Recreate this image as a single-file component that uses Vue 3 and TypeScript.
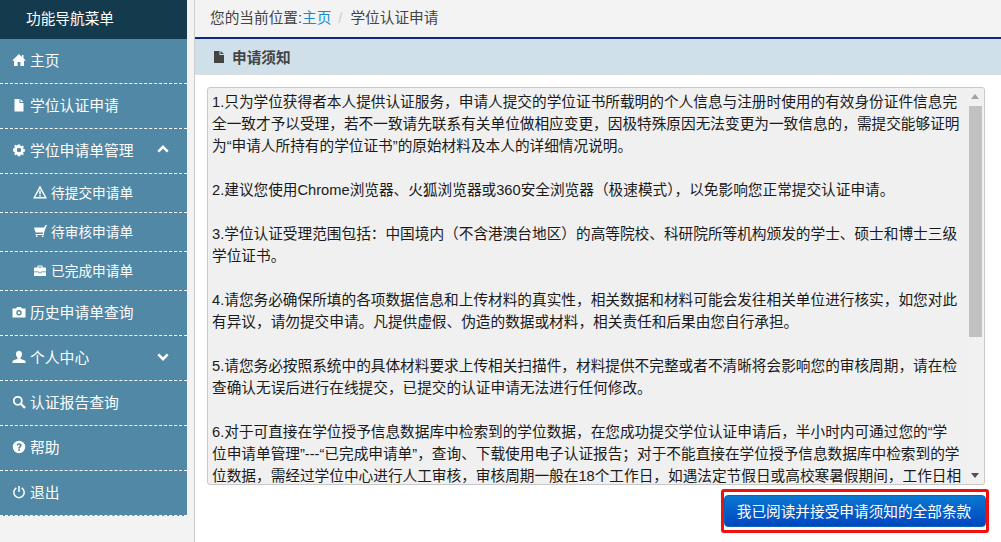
<template>
  <div class="page">
    <aside class="side">
      <div class="side-title">功能导航菜单</div>
      <ul class="menu">
        <li v-for="item in menu" :key="item.label" class="item" :class="{ sub: item.sub }">
          <svg class="ico" viewBox="0 0 14 14" v-html="icons[item.icon]"></svg>
          <span>{{ item.label }}</span>
          <svg v-if="item.arrow" class="arrow" viewBox="0 0 14 10">
            <path :d="item.arrow === 'up' ? 'M1.5 7.5 7 2l5.500 5.500' : 'M1.5 2.500 7 8l5.500-5.500'" fill="none" stroke="#fff" stroke-width="3" />
          </svg>
        </li>
      </ul>
    </aside>
    <main class="main">
      <div class="crumb">
        您的当前位置:<a class="link">主页</a><span class="sep">/</span><span>学位认证申请</span>
      </div>
      <section class="panel">
        <header class="panel-head">
          <svg class="head-ico" viewBox="0 0 10 12"><path d="M0 0h5.500v4H10v8H0zM6.500 0 10 3H6.500z" fill="#444" /></svg>
          <b>申请须知</b>
        </header>
        <div class="panel-body">
          <div class="notice">
            <div class="notice-text">
              <p v-for="(line, i) in lines" :key="i" class="line">{{ line }}</p>
            </div>
            <div class="scroll">
              <i class="tri up"></i>
              <div class="track"><div class="thumb"></div></div>
              <i class="tri down"></i>
            </div>
          </div>
          <div class="actions">
            <div class="focus-box"><button class="accept">我已阅读并接受申请须知的全部条款</button></div>
          </div>
        </div>
      </section>
    </main>
  </div>
</template>

<script setup lang="ts">
type MenuItem = { label: string; icon: string; sub?: boolean; arrow?: "up" | "down" };

const menu: MenuItem[] = [
  { label: "主页", icon: "home" },
  { label: "学位认证申请", icon: "file" },
  { label: "学位申请单管理", icon: "cog", arrow: "up" },
  { label: "待提交申请单", icon: "warn", sub: true },
  { label: "待审核申请单", icon: "cart", sub: true },
  { label: "已完成申请单", icon: "case", sub: true },
  { label: "历史申请单查询", icon: "camera" },
  { label: "个人中心", icon: "user", arrow: "down" },
  { label: "认证报告查询", icon: "search" },
  { label: "帮助", icon: "help" },
  { label: "退出", icon: "power" },
];

const icons: Record<string, string> = {
  home: '<path fill="#fff" d="M7 1 .5 7.200l.8.8L2 7.400V13h3.600V9h2.800v4H12V7.400l.7.6.8-.8L11.500 5.300V2H10v1.900z"/>',
  file: '<path fill="#fff" d="M2.500 1h5v4H11.500v8.500h-9zM8.500 1l3 3h-3z"/>',
  cog: '<path fill="#fff" fill-rule="evenodd" d="M5.800 1.500h2.400l.3 1.400 1 .4 1.200-.8 1.200 1.200-.8 1.200.4 1 1.400.3v2.400l-1.400.3-.4 1 .8 1.200-1.200 1.200-1.200-.8-1 .4-.3 1.400H5.800l-.3-1.400-1-.4-1.200.8-1.200-1.200.8-1.200-.4-1-1.400-.3V5.400l1.400-.3.4-1-.8-1.200 1.200-1.200 1.200.8 1-.4zM7 4.800a2.200 2.200 0 1 0 0 4.400 2.200 2.200 0 0 0 0-4.400z"/>',
  warn: '<path fill="#fff" fill-rule="evenodd" d="M7 .5 14 13.500H0zM7 3.500 2.400 12h9.200zM6.200 5.500h1.600V9.300H6.200zM6.200 10h1.600v1.400H6.200z"/>',
  cart: '<path fill="#fff" d="M1 3.500h10L12.500 1H14l-2.500 6-.8 4H2.500v-1h7.300l.3-1.500H2.500zM3 11.500h1.500V13H3zM9 11.500h1.500V13H9z"/>',
  case: '<path fill="#fff" fill-rule="evenodd" d="M1 4.500h3.500V2.500h5v2H13v4H8v1H6v-1H1zM5.500 3.500v1h3v-1zM1 9.200h4.500v1h3v-1H13V13H1z"/>',
  camera: '<path fill="#fff" fill-rule="evenodd" d="M1 3.500h3L5 2h4l1 1.500h3.500V12.500H.5V3.500zM7 5a2.700 2.700 0 1 0 0 5.400A2.700 2.700 0 0 0 7 5zm0 1.400a1.300 1.300 0 1 1 0 2.600 1.300 1.300 0 0 1 0-2.600z"/>',
  user: '<path fill="#fff" d="M7 .8c1.900 0 3 1.300 3 3.200 0 1.500-.6 3-1.500 3.600v1.300c2.500.5 4.500 1.200 5 2V13H.5v-2.100c.5-.8 2.500-1.500 5-2V7.600C4.600 7 4 5.500 4 4 4 2.100 5.100.8 7 .8z"/>',
  search: '<g fill="none" stroke="#fff"><circle cx="5.800" cy="5.800" r="4" stroke-width="1.800"/><path d="m9 9 4 4" stroke-width="2.400"/></g>',
  help: '<path fill="#fff" fill-rule="evenodd" d="M7 .8a6.200 6.200 0 1 1 0 12.400A6.200 6.200 0 0 1 7 .8zM4.600 5.300l1.500.4C6.200 5 6.500 4.700 7 4.700s.9.300.9.700c0 .9-1.700 1.100-1.700 3H8c0-1.300 1.700-1.500 1.700-3.200C9.700 3.900 8.600 3.200 7 3.200c-1.300 0-2.200.8-2.400 2.100zM6.200 9.200v1.600H8V9.200z"/>',
  power: '<g fill="none" stroke="#fff" stroke-width="1.500"><path d="M4.300 3a5.200 5.200 0 1 0 5.400 0"/><path d="M7 1v6"/></g>',
};

const lines = [
  "1.只为学位获得者本人提供认证服务，申请人提交的学位证书所载明的个人信息与注册时使用的有效身份证件信息完",
  "全一致才予以受理，若不一致请先联系有关单位做相应变更，因极特殊原因无法变更为一致信息的，需提交能够证明",
  "为“申请人所持有的学位证书”的原始材料及本人的详细情况说明。",
  "\u00a0",
  "2.建议您使用Chrome浏览器、火狐浏览器或360安全浏览器（极速模式），以免影响您正常提交认证申请。",
  "\u00a0",
  "3.学位认证受理范围包括：中国境内（不含港澳台地区）的高等院校、科研院所等机构颁发的学士、硕士和博士三级",
  "学位证书。",
  "\u00a0",
  "4.请您务必确保所填的各项数据信息和上传材料的真实性，相关数据和材料可能会发往相关单位进行核实，如您对此",
  "有异议，请勿提交申请。凡提供虚假、伪造的数据或材料，相关责任和后果由您自行承担。",
  "\u00a0",
  "5.请您务必按照系统中的具体材料要求上传相关扫描件，材料提供不完整或者不清晰将会影响您的审核周期，请在检",
  "查确认无误后进行在线提交，已提交的认证申请无法进行任何修改。",
  "\u00a0",
  "6.对于可直接在学位授予信息数据库中检索到的学位数据，在您成功提交学位认证申请后，半小时内可通过您的“学",
  "位申请单管理”---“已完成申请单”，查询、下载使用电子认证报告；对于不能直接在学位授予信息数据库中检索到的学",
  "位数据，需经过学位中心进行人工审核，审核周期一般在18个工作日，如遇法定节假日或高校寒暑假期间，工作日相",
];
</script>

<style>
html,
body {
  margin: 0;
  background: #fff;
}
</style>

<style scoped>
.page {
  display: flex;
  width: 1001px;
  height: 542px;
  overflow: hidden;
  font-family: "Liberation Sans", "Noto Sans CJK SC", sans-serif;
  font-size: 14.67px;
  color: #333;
}
.side {
  width: 195px;
  box-sizing: border-box;
  padding-right: 7px;
  flex: none;
  background: #f3f3f3;
  border-right: 1px solid #ccc;
}
.side-title {
  height: 39px;
  line-height: 38px;
  padding-left: 26px;
  background: #143a4d;
  color: #fff;
}
.menu {
  list-style: none;
  margin: 0;
  padding: 0;
  background: #5088a5;
  color: #fff;
  font-size: 14.8px;
}
.item {
  height: 41px;
  display: flex;
  align-items: center;
  padding: 0 0 3px 12px;
  border-bottom: 1px dashed #fff;
  position: relative;
}
.item.sub {
  height: 35px;
  padding-left: 33px;
  font-size: 13.7px;
}
.ico {
  width: 14px;
  height: 14px;
  margin-right: 4px;
  flex: none;
}
.arrow {
  position: absolute;
  right: 18px;
  top: 16px;
  width: 12px;
  height: 9px;
}
.main {
  flex: 1;
  min-width: 0;
}
.crumb {
  height: 37px;
  line-height: 36px;
  padding-left: 15px;
  background: #f3f3f3;
  color: #444;
}
.link {
  color: #1c8ac7;
}
.sep {
  color: #ccc;
  padding: 0 8px 0 7px;
}
.panel {
  border-top: 2px solid #0c2a7c;
}
.panel-head {
  height: 36px;
  display: flex;
  align-items: center;
  padding-left: 19px;
  box-sizing: border-box;
  background: #cfe0ea;
  border-bottom: 1px solid #ddd;
}
.panel-head b {
  color: #444;
}
.head-ico {
  width: 10px;
  height: 12px;
  margin-right: 8px;
}
.panel-body {
  padding: 12px 16px 0 12px;
}
.notice {
  display: flex;
  height: 396px;
  background: #f0f0f0;
  border: 1px solid #c8c8c8;
  border-radius: 3px;
  overflow: hidden;
}
.notice-text {
  flex: 1;
  min-width: 0;
  overflow: hidden;
  padding: 3px 0 0 4px;
  color: #1a1a1a;
}
.line {
  margin: 0;
  height: 22px;
  line-height: 22px;
  white-space: nowrap;
}
.scroll {
  width: 17px;
  flex: none;
  display: flex;
  flex-direction: column;
  background: #f1f1f1;
}
.track {
  flex: 1;
}
.thumb {
  height: 231px;
  width: 13px;
  margin: 1px 0 0 2px;
  background: #c1c1c1;
}
.tri {
  width: 0;
  height: 0;
  border-left: 4px solid transparent;
  border-right: 4px solid transparent;
  margin: 6px 0 6px 4px;
}
.tri.up {
  border-bottom: 5px solid #a3a3a3;
}
.tri.down {
  border-top: 5px solid #505050;
}
.actions {
  display: flex;
  justify-content: flex-end;
  margin-top: 4px;
}
.focus-box {
  border: 3px solid #f01010;
  border-radius: 3px;
  padding: 3px 0;
  margin-right: -4px;
}
.accept {
  display: block;
  width: 262px;
  height: 32px;
  padding: 0 2px 2px 0;
  border: 1px solid #0a63ba;
  border-radius: 4px;
  background: linear-gradient(#0a78d0, #0046c0);
  color: #fff;
  font: inherit;
}
</style>
